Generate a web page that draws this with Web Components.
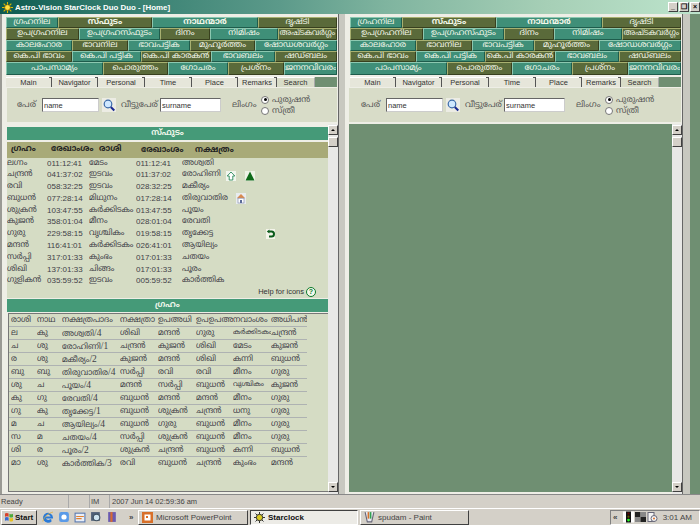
<!DOCTYPE html>
<html>
<head>
<meta charset="utf-8">
<style>
html,body{margin:0;padding:0;width:700px;height:525px;overflow:hidden;background:#d4d0c8;font-family:"Liberation Sans",sans-serif}
</style>
</head>
<body>
<main-window></main-window>
<script>
const ML = '"Noto Sans Malayalam","Noto Serif Malayalam","Liberation Sans","Noto Sans",sans-serif';

class TitleBar extends HTMLElement {
  constructor(){super();this.attachShadow({mode:"open"});}
  connectedCallback(){
    this.shadowRoot.innerHTML = `
    <style>
      :host{display:flex;align-items:center;height:14px;padding:0 0 0 2px;background:linear-gradient(90deg,#0d5a50 0,#2f7a6c 14%,#5c9a8a 40%,#7fb49f 55%,#a6cfb6 78%,#bde4cc 100%);color:#fff;font:bold 7.9px "Liberation Sans",sans-serif;gap:1px}
      span{flex:1;white-space:nowrap;margin-left:1px}
      .b{width:10px;height:10px;background:#d4d0c8;border:1px solid;border-color:#fff #404040 #404040 #fff;box-sizing:border-box;color:#000;font:bold 7px/8px "Liberation Sans",sans-serif;text-align:center;flex:none}
      svg{width:11px;height:11px;flex:none}
    </style>
    <svg viewBox="0 0 10 10"><g stroke="#d8b800" stroke-width="1"><path d="M5 0v10M0 5h10M1.5 1.5l7 7M8.5 1.5l-7 7"/></g><circle cx="5" cy="5" r="2.6" fill="#ffe040" stroke="#705000" stroke-width=".6"/></svg>
    <span>Astro-Vision StarClock Duo Duo - [Home]</span>
    <div class="b">_</div><div class="b">❐</div><div class="b">×</div>`;
  }
}
customElements.define("title-bar",TitleBar);

const NAV = [
  [["ഗ്രഹനില",52],["സ്ഫുടം",94],["നാഥന്മാർ",106],["ദൃഷ്ടി",79]],
  [["ഉപഗ്രഹനില",73],["ഉപഗ്രഹസ്ഫുടം",81],["ദിനം",50],["നിമിഷം",68],["അഷ്ടകവർഗ്ഗം",59]],
  [["കാലഹോര",66],["ഭാവനില",56],["ഭാവപട്ടിക",62],["മുഹൂർത്തം",65],["ഷോഡശവർഗ്ഗം",82]],
  [["കെ.പി ഭാവം",66],["കെ.പി പട്ടിക",69],["കെ.പി കാരകൻ",70],["ഭാവബലം",64],["ഷഡ്ബലം",62]],
  [["പാപസാമ്യം",97],["പൊരുത്തം",65],["ഗോചരം",60],["പ്രശ്നം",56],["ജനനവിവരം",53]]
];

class NavGrid extends HTMLElement {
  constructor(){super();this.attachShadow({mode:"open"});}
  connectedCallback(){
    const rows = NAV.map((r,ri)=>{
      const start = ri%2===1 ? 1 : 0;
      return `<div class="r r${ri}">`+r.map(([t,w],i)=>{
        const k = (i+start)%2 ? "o":"t";
        const bold = ri===0 && (i===1||i===2) ? " s":"";
        const fit = t==="അഷ്ടകവർഗ്ഗം" ? " f":"";
        return `<div class="c ${k}${bold}${fit}" style="width:${w}px">${t}</div>`;
      }).join("")+`</div>`;
    }).join("");
    this.shadowRoot.innerHTML = `
    <style>
      :host{display:block;padding:3px 0 2px 0}
      .r{display:flex;height:11px}
      .r.r1{height:12px}
      .r.r4{height:13px}
      .c{box-sizing:border-box;height:100%;border:1px solid;border-radius:1px;text-align:center;font:8.5px/9px ${ML};color:#f2f6e8;white-space:nowrap;overflow:hidden}
      .r4 .c{line-height:10px}
      .f{font-size:7.6px}
      .t{background:#3f8f78;border-color:#8cc8b0 #1e5c4c #1e5c4c #8cc8b0}
      .o{background:#5a6a3a;border-color:#a8b070 #38401e #38401e #a8b070}
      .s{font-weight:bold}
    </style>${rows}`;
  }
}
customElements.define("nav-grid",NavGrid);

class TabStrip extends HTMLElement {
  constructor(){super();this.attachShadow({mode:"open"});}
  connectedCallback(){
    const tabs=[["Main",46],["Navigator",46],["Personal",47],["Time",47],["Place",46],["Remarks",39],["Search",38]];
    this.shadowRoot.innerHTML = `
    <style>
      :host{display:flex;height:10px;margin-bottom:1px;font:7.5px/9px "Liberation Sans",sans-serif;color:#333}
      div{box-sizing:border-box;text-align:center;background:#e6e6da;border-right:1px solid #555;border-top:1px solid #fff;flex:none;position:relative}
      div::after{content:"";position:absolute;right:-3px;top:-1px;width:5px;height:1px;background:#555}
      .fill{flex:1;background:#6f8f72;border:0;margin-right:1px}
      .fill::after,.on::after{display:none}
      .on{background:#d8dcc8;line-height:10px;border-right:1px solid #aaa}
    </style>
    ${tabs.map(([t,w],i)=>`<div class="${i==6?'on':''}" style="width:${w}px">${t}</div>`).join("")}<div class="fill"></div>`;
  }
}
customElements.define("tab-strip",TabStrip);

class SearchForm extends HTMLElement {
  constructor(){super();this.attachShadow({mode:"open"});}
  connectedCallback(){
    this.shadowRoot.innerHTML = `
    <style>
      :host{display:flex;align-items:center;box-sizing:border-box;height:34px;margin-left:var(--fl,1px);margin-right:1px;background:#d8dcc8;font:8.5px ${ML};color:#555;white-space:nowrap}
      .l1{margin-left:calc(12px - var(--fl,1px) - 1px);width:25px}
      input{box-sizing:border-box;height:14px;padding:0 1px;border:1px solid;border-color:#666 #ccc #ccc #666;background:#fff;font:7.5px "Liberation Sans",sans-serif;color:#333;margin:0;flex:none}
      .i1{width:57px}
      .i2{width:61px}
      .go{width:14px;height:14px;margin:0 5px 0 3px;flex:none}
      .l2{width:39px}
      .l3{margin-left:11px;width:28px}
      .g{display:grid;grid-template-columns:11px auto;row-gap:1px;align-items:center;margin-left:1px}
      .rd{width:8px;height:8px;border-radius:50%;background:#fff;border:1px solid #777;box-sizing:border-box;display:flex;align-items:center;justify-content:center}
      .rd i{width:3px;height:3px;border-radius:50%;background:#000}
    </style>
    <span class="l1">പേര്</span><input class="i1" value="name">
    <svg class="go" viewBox="0 0 14 14"><rect width="14" height="14" fill="#ecece4"/><circle cx="6" cy="6" r="3.8" fill="#cfe8ff" stroke="#3a6aa8" stroke-width="1.2"/><path d="M8.8 9l3.5 3.5" stroke="#1a2a90" stroke-width="2"/></svg>
    <span class="l2">വീട്ടുപേര്</span><input class="i2" value="surname">
    <span class="l3">ലിംഗം</span>
    <div class="g"><span class="rd"><i></i></span><span>പുരുഷൻ</span><span class="rd"></span><span>സ്ത്രീ</span></div>`;
  }
}
customElements.define("search-form",SearchForm);

class SectionHead extends HTMLElement {
  constructor(){super();this.attachShadow({mode:"open"});}
  connectedCallback(){
    this.shadowRoot.innerHTML = `
    <style>
      :host{display:block;height:13px;background:#459a78;color:#eef6ea;text-align:center;font:bold 8px/12px ${ML}}
    </style><slot></slot>`;
  }
}
customElements.define("section-head",SectionHead);

const SPHUTA = [
  ["ലഗ്നം","011:12:41","മേടം","011:12:41","അശ്വതി",""],
  ["ചന്ദ്രൻ","041:37:02","ഇടവം","011:37:02","രോഹിണി","up"],
  ["രവി","058:32:25","ഇടവം","028:32:25","മകീര്യം",""],
  ["ബുധൻ","077:28:14","മിഥുനം","017:28:14","തിരുവാതിര","home"],
  ["ശുക്രൻ","103:47:55","കർക്കിടകം","013:47:55","പൂയം",""],
  ["കുജൻ","358:01:04","മീനം","028:01:04","രേവതി",""],
  ["ഗുരു","229:58:15","വൃശ്ചികം","019:58:15","തൃക്കേട്ട","back"],
  ["മന്ദൻ","116:41:01","കർക്കിടകം","026:41:01","ആയില്യം",""],
  ["സർപ്പി","317:01:33","കുംഭം","017:01:33","ചതയം",""],
  ["ശിഖി","137:01:33","ചിങ്ങം","017:01:33","പൂരം",""],
  ["ഗുളികൻ","035:59:52","ഇടവം","005:59:52","കാർത്തിക",""]
];
const ICONS = {
  up:`<svg style="left:219px;top:2px" width="10" height="10" viewBox="0 0 10 10"><rect width="10" height="10" fill="#f2f6ee"/><path d="M5 1L1.2 5h2v4h3.6V5h2z" fill="#fff" stroke="#2a8a5a" stroke-width=".9"/></svg><svg style="left:238px;top:2px" width="10" height="10" viewBox="0 0 10 10"><rect width="10" height="10" fill="#eef2e6"/><path d="M5 .5L9.5 9.5H.5z" fill="#0f6a1a"/></svg>`,
  home:`<svg style="left:229px;top:0" width="10" height="11" viewBox="0 0 10 11"><rect width="10" height="11" fill="#e8ecf0"/><path d="M5 1L.8 5.2h8.4z" fill="#d88a50"/><rect x="2" y="5.2" width="6" height="4.8" fill="#fff" stroke="#8890b0" stroke-width=".7"/><rect x="4" y="7" width="2" height="3" fill="#5a6a98"/></svg>`,
  back:`<svg style="left:259px;top:1px" width="9" height="10" viewBox="0 0 9 10"><rect width="9" height="10" fill="#f4f4ea"/><path d="M3 2.5h2.5a2 2 0 0 1 0 5H3" fill="none" stroke="#0a5a1a" stroke-width="2"/><path d="M3.4.6L.8 2.6l2.6 2z" fill="#0a5a1a"/></svg>`
};

class SphutaTable extends HTMLElement {
  constructor(){super();this.attachShadow({mode:"open"});}
  connectedCallback(){
    this.shadowRoot.innerHTML = `
    <style>
      :host{display:block;background:#d5dcc4;font:8px/12px ${ML};color:#3f4048;height:156px;margin-top:2px}
      .h{display:grid;grid-template-columns:40px 48px 42px 54px 1fr;box-sizing:border-box;height:15.5px;padding-left:4px;background:#a8aa78;color:#222;font-weight:bold;line-height:14px;white-space:nowrap}
      .h span:nth-child(n+4){line-height:16px}
      .row{display:grid;grid-template-columns:40px 42px 47px 46px 1fr;height:11.8px;line-height:11.8px;position:relative;white-space:nowrap}
      .row span{overflow:hidden}
      .row svg{position:absolute}
      .n{font-family:"Liberation Sans",sans-serif}
      .help{padding:0 12px 0 0;font:7.5px/10px "Liberation Sans",sans-serif;color:#333;display:flex;justify-content:flex-end;align-items:center;gap:2px;height:10px}
      .help b{box-sizing:border-box;display:inline-block;width:10px;height:10px;border:1.5px solid #0a7a2a;border-radius:50%;background:#f4f8ec;color:#0a7a2a;font:bold 7px/7px "Liberation Sans",sans-serif;text-align:center}
    </style>
    <div class="h"><span>ഗ്രഹം</span><span>രേഖാംശം</span><span>രാശി</span><span>രേഖാംശം</span><span>നക്ഷത്രം</span></div>
    ${SPHUTA.map(r=>`<div class="row"><span>${r[0]}</span><span class="n">${r[1]}</span><span>${r[2]}</span><span class="n">${r[3]}</span><span>${r[4]}</span>${r[5]?ICONS[r[5]]:""}</div>`).join("")}
    <div class="help">Help for icons <b>?</b></div>`;
  }
}
customElements.define("sphuta-table",SphutaTable);

const GRAHAM = [
  ["രാശി","നാഥ","നക്ഷത്രപാദം","നക്ഷത്രാ","ഉപഅധി","ഉപഉപഅ","നവാംശം","അധിപൻ"],
  ["ല","കു","അശ്വതി/4","ശിഖി","മന്ദൻ","ഗുരു","കർക്കിടകം","ചന്ദ്രൻ"],
  ["ച","ശു","രോഹിണി/1","ചന്ദ്രൻ","കുജൻ","ശിഖി","മേടം","കുജൻ"],
  ["ര","ശു","മകീര്യം/2","കുജൻ","മന്ദൻ","ശിഖി","കന്നി","ബുധൻ"],
  ["ബു","ബു","തിരുവാതിര/4","സർപ്പി","രവി","രവി","മീനം","ഗുരു"],
  ["ശു","ച","പൂയം/4","മന്ദൻ","സർപ്പി","ബുധൻ","വൃശ്ചികം","കുജൻ"],
  ["കു","ഗു","രേവതി/4","ബുധൻ","മന്ദൻ","മന്ദൻ","മീനം","ഗുരു"],
  ["ഗു","കു","തൃക്കേട്ട/1","ബുധൻ","ശുക്രൻ","ചന്ദ്രൻ","ധനു","ഗുരു"],
  ["മ","ച","ആയില്യം/4","ബുധൻ","ഗുരു","ബുധൻ","മീനം","ഗുരു"],
  ["സ","മ","ചതയം/4","സർപ്പി","ശുക്രൻ","ബുധൻ","മീനം","ഗുരു"],
  ["ശി","ര","പൂരം/2","ശുക്രൻ","ചന്ദ്രൻ","ബുധൻ","കന്നി","ബുധൻ"],
  ["മാ","ശു","കാർത്തിക/3","രവി","ബുധൻ","ചന്ദ്രൻ","കുംഭം","മന്ദൻ"]
];

class GrahamTable extends HTMLElement {
  constructor(){super();this.attachShadow({mode:"open"});}
  connectedCallback(){
    const cols="26px 25px 58px 38px 38px 37px 38px 36px";
    const cell = c => {
      const fit = c==="കർക്കിടകം"||c==="വൃശ്ചികം" ? ' class="fit"':"";
      return `<span${fit}>${c.replace(/\/(\d)/,'<i>/$1</i>')}</span>`;
    };
    this.shadowRoot.innerHTML = `
    <style>
      :host{display:block;flex:1;min-height:0;background:#d5dcc4;font:8px/12px ${ML};color:#3f4048;margin:1px 0 2px 1px;border:1px solid #777;border-width:1px 0 1px 1px;box-sizing:border-box;overflow:hidden}
      .row{display:grid;grid-template-columns:${cols};width:298px;height:13px;padding-left:2px;box-sizing:border-box;border-bottom:1px solid #aeb2b2;white-space:nowrap}
      .row span{overflow:hidden}
      .row:last-child{border:0}
      .fit{font-size:7px}
      i{font:9.5px/12px "Liberation Serif",serif}
    </style>
    ${GRAHAM.map(r=>`<div class="row">${r.map(cell).join("")}</div>`).join("")}`;
  }
}
customElements.define("graham-table",GrahamTable);

class ScrollTrack extends HTMLElement {
  constructor(){super();this.attachShadow({mode:"open"});}
  connectedCallback(){
    this.shadowRoot.innerHTML = `
    <style>
      :host{display:flex;flex-direction:column;width:10px;padding:1px 0 2px;box-sizing:border-box;background:#e8e8e6;flex:none}
      .b{height:10px;background:#d4d0c8;box-sizing:border-box;border:1px solid;border-color:#fff #404040 #404040 #fff;flex:none;display:flex;align-items:center;justify-content:center}
      .t{height:10px;margin-top:2px;background:#d4d0c8;box-sizing:border-box;border:1px solid;border-color:#fff #404040 #404040 #fff;flex:none}
      .s{flex:1}
      i{width:0;height:0;border:2px solid transparent}
      .u{border-bottom-color:#000;margin-top:-2px}
      .d{border-top-color:#000;margin-bottom:-2px}
    </style>
    <div class="b"><i class="u"></i></div><div class="t"></div><div class="s"></div><div class="b"><i class="d"></i></div>`;
  }
}
customElements.define("scroll-track",ScrollTrack);

class ChartPane extends HTMLElement {
  constructor(){super();this.attachShadow({mode:"open"});}
  connectedCallback(){
    const full = this.hasAttribute("full");
    this.shadowRoot.innerHTML = `
    <style>
      :host{display:flex;box-sizing:border-box;height:480px;flex:none;background:#eeeee6;${full?"width:349px;padding-left:4px;border-left:2px solid #9a9a94;":"width:341px;padding-left:1px;--fl:-1px;"}}
      .col{display:flex;flex-direction:column;width:332px;flex:none}
      .edge{width:1px;background:#666;flex:none}
      .stripe{width:${full?6:7}px;background:#c8c8c0;flex:none}
      .rest{flex:1}
      .body{display:flex;flex:1;min-height:0;margin-top:2px}
      .main{flex:1;min-width:0;display:flex;flex-direction:column;margin-left:${full?"1px":"-1px"};padding-top:${full?"3px":"0"}}
      .empty{flex:1;background:#6f8f72;margin-bottom:2px}
    </style>
    <div class="col">
      <nav-grid></nav-grid>
      <tab-strip></tab-strip>
      <search-form></search-form>
      <div class="body">
        <div class="main">${full?`
          <section-head>സ്ഫുടം</section-head>
          <sphuta-table></sphuta-table>
          <section-head style="margin-top:1px">ഗ്രഹം</section-head>
          <graham-table></graham-table>`:`<div class="empty"></div>`}
        </div>
        <scroll-track></scroll-track>
      </div>
    </div>
    <div class="edge"></div><div class="stripe"></div><div class="rest"></div>`;
  }
}
customElements.define("chart-pane",ChartPane);

class StatusBar extends HTMLElement {
  constructor(){super();this.attachShadow({mode:"open"});}
  connectedCallback(){
    this.shadowRoot.innerHTML = `
    <style>
      :host{display:flex;height:14px;background:#d4d0c8;font:7.5px/14px "Liberation Sans",sans-serif;color:#444;border-top:1px solid #888;box-sizing:border-box}
      div{box-sizing:border-box;border-right:1px solid #aaa;padding-left:1px}
    </style>
    <div style="width:69px">Ready</div><div style="width:21px"></div><div style="width:20px">IM</div><div style="flex:1;border:0;padding-left:2px">2007 Jun 14 02:59:36 am</div>`;
  }
}
customElements.define("status-bar",StatusBar);

class TaskBar extends HTMLElement {
  constructor(){super();this.attachShadow({mode:"open"});}
  connectedCallback(){
    this.shadowRoot.innerHTML = `
    <style>
      :host{display:flex;align-items:center;height:17px;background:#d4d0c8;border-top:1px solid #fff;box-sizing:border-box;font:8px "Liberation Sans",sans-serif;color:#444}
      .btn{box-sizing:border-box;height:15px;border:1px solid;border-color:#fff #404040 #404040 #fff;display:flex;align-items:center;gap:3px;padding-left:3px;white-space:nowrap;flex:none}
      .on{border-color:#404040 #fff #fff #404040;background:#ecebe6;font-weight:bold;color:#111}
      .start{width:36px;font-weight:bold;color:#111;gap:1px;padding-left:2px;margin-left:1px}
      .ql{display:flex;gap:4px;margin-left:5px;width:85px;align-items:center;flex:none}
      .ql svg{flex:none}
      .tray{margin-left:auto;width:90px;height:15px;box-sizing:border-box;border:1px solid;border-color:#808080 #fff #fff #808080;display:flex;align-items:center;gap:1px;padding-left:2px}
      .clock{margin-left:auto;margin-right:7px}
    </style>
    <div class="btn start"><svg width="10" height="10" viewBox="0 0 10 10"><path d="M1 1.5q2-1 3.6 0v3.2q-1.6-1-3.6 0z" fill="#d8402a"/><path d="M5.4 1.7q1.8 1 3.6 0v3.2q-1.8 1-3.6 0z" fill="#4caa3a"/><path d="M1 5.5q2-1 3.6 0v3.2q-1.6-1-3.6 0z" fill="#3a6ad0"/><path d="M5.4 5.7q1.8 1 3.6 0v3.2q-1.8 1-3.6 0z" fill="#e8c020"/></svg>Start</div>
    <div class="ql">
      <svg width="12" height="12" viewBox="0 0 12 12"><path d="M2.5 6.5h7.5a4 4 0 1 0-1 3" fill="none" stroke="#2a7ad8" stroke-width="2"/><path d="M2.8 6.5a3.4 3.4 0 0 0 6.2 2" fill="none" stroke="#2a7ad8" stroke-width="2"/><path d="M.8 10.5C2 6 6 2.5 11 1" fill="none" stroke="#e0b040" stroke-width=".8"/></svg>
      <svg width="12" height="12" viewBox="0 0 11 11"><rect x="1" y="1" width="9" height="9" rx="2" fill="#5a9ae8"/><circle cx="5.5" cy="5.5" r="2.4" fill="#fff"/></svg>
      <svg width="12" height="12" viewBox="0 0 11 11"><rect x="1" y="2" width="9" height="8" fill="#e8eef8" stroke="#5a7ab0"/><path d="M2 5h7M2 7h5" stroke="#e08030"/></svg>
      <svg width="12" height="12" viewBox="0 0 11 11"><rect x="1" y="1" width="8" height="8" fill="#506078"/><circle cx="6" cy="6" r="3" fill="#cfe4f0" stroke="#405060"/></svg>
      <svg width="12" height="12" viewBox="0 0 11 11"><rect x="2" y="1" width="7" height="9" fill="#6a5ab0"/><path d="M5 1v9" stroke="#d86a30" stroke-width="2"/></svg>
    </div>
    <span style="font-weight:bold;width:7px;margin:0 2px;flex:none">»</span>
    <div class="btn" style="width:110px"><svg width="11" height="11" viewBox="0 0 11 11"><rect width="11" height="11" fill="#d8702a"/><rect x="2.5" y="2.5" width="6" height="6" fill="#fff"/><rect x="4" y="4" width="2" height="2" fill="#d8702a"/></svg>Microsoft PowerPoint</div>
    <div class="btn on" style="width:108px;margin-left:2px"><svg width="11" height="11" viewBox="0 0 11 11"><g stroke="#333"><path d="M5.5 0v11M0 5.5h11M1.5 1.5l8 8M9.5 1.5l-8 8"/></g><circle cx="5.5" cy="5.5" r="3.2" fill="#d8c820" stroke="#333"/></svg>Starclock</div>
    <div class="btn" style="width:109px;margin-left:2px"><svg width="11" height="12" viewBox="0 0 10 11"><path d="M1 1l2 9h4l2-9" fill="#e8e8f0" stroke="#667"/><path d="M4 1v6" stroke="#d8702a" stroke-width="1.5"/><path d="M6 1v6" stroke="#30a050" stroke-width="1.5"/></svg>spudam - Paint</div>
    <div class="tray">
      <span style="font-weight:bold;width:9px">«</span>
      <svg width="11" height="12" viewBox="0 0 11 11"><rect width="11" height="11" fill="#fff"/><rect x="3" width="5" height="11" fill="#111"/><circle cx="5.5" cy="2" r="1.1" fill="#600"/><circle cx="5.5" cy="5.2" r="1.1" fill="#650"/><circle cx="5.5" cy="8.6" r="1.4" fill="#2f2"/></svg>
      <svg width="11" height="10" viewBox="0 0 11 10"><rect width="5.5" height="5" fill="#222"/><rect x="5.5" width="5.5" height="5" fill="#888"/><rect y="5" width="5.5" height="5" fill="#888"/><rect x="5.5" y="5" width="5.5" height="5" fill="#222"/></svg>
      <svg width="11" height="12" viewBox="0 0 11 11"><rect x="1" y="1" width="6" height="9" fill="#f4f4f4" stroke="#667"/><circle cx="7" cy="7" r="3" fill="#f4f4f4" stroke="#667"/><circle cx="7" cy="7" r="1" fill="#d8702a"/></svg>
      <span class="clock">3:01 AM</span>
    </div>`;
  }
}
customElements.define("task-bar",TaskBar);

class MainWindow extends HTMLElement {
  constructor(){super();this.attachShadow({mode:"open"});}
  connectedCallback(){
    this.shadowRoot.innerHTML = `
    <style>
      :host{display:flex;flex-direction:column;width:700px;height:525px;background:#d4d0c8}
      .work{display:flex;height:480px;background:#6f8f72}
      .right{flex:1;background:#6f8f72}
    </style>
    <title-bar></title-bar>
    <div class="work"><chart-pane full></chart-pane><chart-pane></chart-pane><div class="right"></div></div>
    <status-bar></status-bar>
    <task-bar></task-bar>`;
  }
}
customElements.define("main-window",MainWindow);
</script>
</body>
</html>
